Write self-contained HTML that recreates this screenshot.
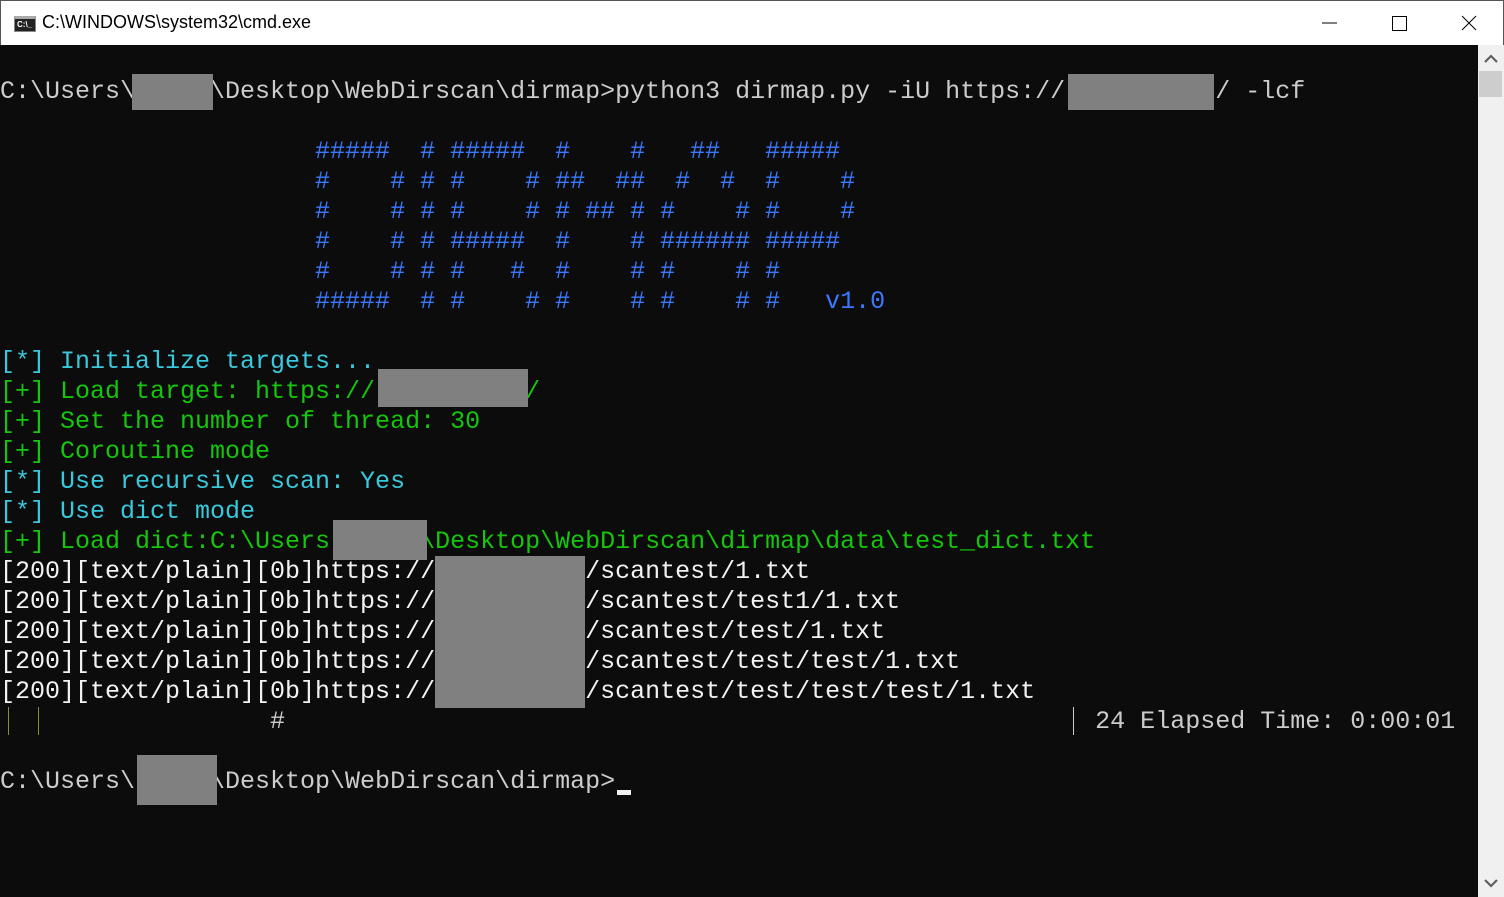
<!DOCTYPE html>
<html><head><meta charset="utf-8"><style>
*{margin:0;padding:0;box-sizing:border-box}
body{width:1504px;height:897px;overflow:hidden;background:#0c0c0c;position:relative;font-family:"Liberation Mono",monospace}
#title{position:absolute;left:0;top:0;width:1504px;height:45px;background:#fff;border:1px solid #555;border-bottom:none}
#title .t{position:absolute;left:41px;top:11px;font:18px "Liberation Sans",sans-serif;color:#000}
#icon{position:absolute;left:13px;top:15px;width:22px;height:16px;background:#222;border:1px solid #888;border-top:3px solid #aaa}
#icon span{position:absolute;left:2px;top:1px;font:bold 8px "Liberation Sans",sans-serif;color:#fff}
pre{position:absolute;left:0;top:77px;font-size:25px;line-height:30px;color:#cccccc;font-family:"Liberation Mono",monospace;white-space:pre}
.c{color:#3ac8dc}.g{color:#16c60c}.b{color:#3b78ff}.w{color:#f2f2f2}
.box{position:absolute;background:#808080}
#sb{position:absolute;left:1478px;top:45px;width:26px;height:852px;background:#f0f0f0}
#thumb{position:absolute;left:1479px;top:71px;width:23px;height:26px;background:#cdcdcd}
.vl{position:absolute;width:1px;height:28px;top:707px}
</style></head><body>
<div id="title"><div id="icon"><span>C:\_</span></div><div class="t">C:\WINDOWS\system32\cmd.exe</div>
<svg style="position:absolute;left:1318px;top:12px" width="170" height="22"><line x1="3" y1="10" x2="18" y2="10" stroke="#000" stroke-width="1"/><rect x="73.5" y="3.5" width="14" height="14" fill="none" stroke="#000"/><path d="M143 3 L157 17 M157 3 L143 17" stroke="#000" stroke-width="1"/></svg></div>
<div id="sb"></div><div id="thumb"></div>
<svg style="position:absolute;left:1482px;top:52px" width="18" height="14"><path d="M3 10 L9 4 L15 10" stroke="#606060" stroke-width="2.2" fill="none"/></svg>
<svg style="position:absolute;left:1482px;top:876px" width="18" height="14"><path d="M3 4 L9 10 L15 4" stroke="#606060" stroke-width="2.2" fill="none"/></svg>
<pre>C:\Users\     \Desktop\WebDirscan\dirmap>python3 dirmap.py -iU https://          / -lcf

<span class="b">                     #####  # #####  #    #   ##   #####
                     #    # # #    # ##  ##  #  #  #    #
                     #    # # #    # # ## # #    # #    #
                     #    # # #####  #    # ###### #####
                     #    # # #   #  #    # #    # #
                     #####  # #    # #    # #    # #   v1.0</span>

<span class="c">[*] Initialize targets...</span>
<span class="g">[+] Load target: https://          /</span>
<span class="g">[+] Set the number of thread: 30</span>
<span class="g">[+] Coroutine mode</span>
<span class="c">[*] Use recursive scan: Yes</span>
<span class="c">[*] Use dict mode</span>
<span class="g">[+] Load dict:C:\Users      \Desktop\WebDirscan\dirmap\data\test_dict.txt</span>
<span class="w">[200][text/plain][0b]https://          /scantest/1.txt
[200][text/plain][0b]https://          /scantest/test1/1.txt
[200][text/plain][0b]https://          /scantest/test/1.txt
[200][text/plain][0b]https://          /scantest/test/test/1.txt
[200][text/plain][0b]https://          /scantest/test/test/test/1.txt</span>
                  #                                                      24 Elapsed Time: 0:00:01

C:\Users\     \Desktop\WebDirscan\dirmap></pre>
<div class="vl" style="left:8px;background:#8a8a3a"></div>
<div class="vl" style="left:38px;background:#8a8a3a"></div>
<div class="vl" style="left:1073px;background:#ccc"></div>
<div class="box" style="left:132px;top:74px;width:81px;height:36px"></div>
<div class="box" style="left:1068px;top:74px;width:146px;height:36px"></div>
<div class="box" style="left:378px;top:369px;width:150px;height:38px"></div>
<div class="box" style="left:333px;top:520px;width:94px;height:40px"></div>
<div class="box" style="left:435px;top:556px;width:150px;height:152px"></div>
<div class="box" style="left:137px;top:755px;width:80px;height:50px"></div>
<div style="position:absolute;left:617px;top:790px;width:14px;height:5px;background:#f2f2f2"></div>
</body></html>
